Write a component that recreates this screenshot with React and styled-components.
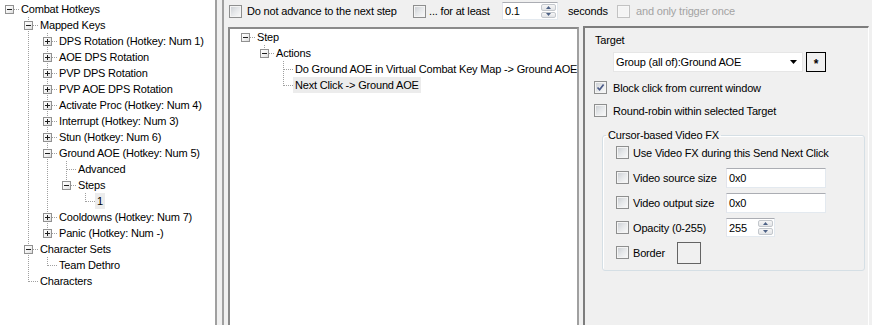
import React from "react";
import styled, { createGlobalStyle } from "styled-components";

const GlobalStyle = createGlobalStyle`
  html, body {
    margin: 0;
    padding: 0;
    background: #f0f0f0;
  }
  body {
    font-family: "Liberation Sans", Arial, sans-serif;
    font-size: 11px;
    color: #000;
  }
`;

const DOTS_V = "repeating-linear-gradient(to bottom, #a0a0a0 0 1px, transparent 1px 2px)";
const DOTS_H = "repeating-linear-gradient(to right, #a0a0a0 0 1px, transparent 1px 2px)";

const Window = styled.div`
  display: flex;
  width: 872px;
  height: 325px;
  overflow: hidden;
  background: #f0f0f0;
  font-family: "Liberation Sans", Arial, sans-serif;
  font-size: 11px;
  letter-spacing: -0.18px;
  color: #000;
`;

const NavPane = styled.div`
  width: 215px;
  flex: none;
  background: #fff;
  border-right: 2px solid #a0a0a0;
  padding-top: 1px;
`;

const Splitter = styled.div`
  width: 5px;
  flex: none;
`;

const Main = styled.div`
  flex: 1;
  min-width: 0;
  display: flex;
  flex-direction: column;
  border-left: 2px solid #a0a0a0;
`;

const Toolbar = styled.div`
  display: flex;
  align-items: center;
  height: 22px;
  padding-left: 5px;
  flex: none;
`;

const Body = styled.div`
  flex: 1;
  display: flex;
  padding: 4px 3px 0 4px;
  gap: 4px;
  min-height: 0;
`;

const StepPane = styled.div`
  width: 341px;
  flex: none;
  margin-top: 1px;
  background: #fff;
  border-style: solid;
  border-width: 2px 2px 0 2px;
  border-color: #8a8a8a #a0a0a0 #a0a0a0 #8a8a8a;
  padding-left: 6px;
  overflow: hidden;
`;

const SettingsPane = styled.div`
  flex: 1;
  display: flex;
  flex-direction: column;
  border-style: solid;
  border-width: 2px 1px 0 2px;
  border-color: #7d7d7d #fff #fff #7d7d7d;
`;

/* ---------- tree ---------- */

const TreeRow = styled.div`
  display: flex;
  height: 16px;
`;

const Guide = styled.div`
  position: relative;
  width: 19px;
  flex: none;
`;

const VLine = styled.span`
  position: absolute;
  left: 9px;
  width: 1px;
  top: ${(p) => p.$top}px;
  height: ${(p) => p.$height}px;
  background: ${DOTS_V};
`;

const HLine = styled.span`
  position: absolute;
  left: 10px;
  top: 8px;
  width: 9px;
  height: 1px;
  background: ${DOTS_H};
`;

const Expander = styled.span`
  position: absolute;
  left: 5px;
  top: 4px;
  width: 9px;
  height: 9px;
  box-sizing: border-box;
  border: 1px solid #919191;
  background: linear-gradient(135deg, #ffffff 0%, #f2f2f2 55%, #dcdcdc 100%);
  z-index: 1;

  &::before {
    content: "";
    position: absolute;
    left: 1px;
    top: 3px;
    width: 5px;
    height: 1px;
    background: #1e1e1e;
  }

  &::after {
    content: "";
    display: ${(p) => (p.$open ? "none" : "block")};
    position: absolute;
    left: 3px;
    top: 1px;
    width: 1px;
    height: 5px;
    background: #1e1e1e;
  }
`;

const TreeLabel = styled.span`
  padding: 0 2px;
  line-height: 16px;
  white-space: nowrap;
  background: ${(p) => (p.$selected ? "#ececec" : "transparent")};
`;

function flatten(nodes, level = 0, continues = [], out = []) {
  nodes.forEach((node, i) => {
    const isLast = i === nodes.length - 1;
    out.push({
      node,
      level,
      isLast,
      isFirstRoot: level === 0 && i === 0,
      continues,
    });
    if (node.children && node.open) {
      flatten(node.children, level + 1, [...continues, !isLast], out);
    }
  });
  return out;
}

function Tree({ data }) {
  const rows = flatten(data);
  return rows.map((row, idx) => {
    const { node, isLast, isFirstRoot, continues } = row;
    const hasKids = !!node.children || node.collapsed;
    const top = isFirstRoot ? 8 : 0;
    const bottom = isLast ? 9 : 16;
    return (
      <TreeRow key={idx}>
        {continues.map((c, k) => (
          <Guide key={k}>{c && <VLine $top={0} $height={16} />}</Guide>
        ))}
        <Guide>
          {bottom > top && <VLine $top={top} $height={bottom - top} />}
          <HLine />
          {hasKids && <Expander $open={!!node.open} />}
        </Guide>
        <TreeLabel $selected={node.selected}>{node.label}</TreeLabel>
      </TreeRow>
    );
  });
}

const navData = [
  {
    label: "Combat Hotkeys",
    open: true,
    children: [
      {
        label: "Mapped Keys",
        open: true,
        children: [
          { label: "DPS Rotation (Hotkey: Num 1)", collapsed: true },
          { label: "AOE DPS Rotation", collapsed: true },
          { label: "PVP DPS Rotation", collapsed: true },
          { label: "PVP AOE DPS Rotation", collapsed: true },
          { label: "Activate Proc (Hotkey: Num 4)", collapsed: true },
          { label: "Interrupt (Hotkey: Num 3)", collapsed: true },
          { label: "Stun (Hotkey: Num 6)", collapsed: true },
          {
            label: "Ground AOE (Hotkey: Num 5)",
            open: true,
            children: [
              { label: "Advanced" },
              {
                label: "Steps",
                open: true,
                children: [{ label: "1", selected: true }],
              },
            ],
          },
          { label: "Cooldowns (Hotkey: Num 7)", collapsed: true },
          { label: "Panic (Hotkey: Num -)", collapsed: true },
        ],
      },
      {
        label: "Character Sets",
        open: true,
        children: [{ label: "Team Dethro" }],
      },
      { label: "Characters" },
    ],
  },
];

const stepData = [
  {
    label: "Step",
    open: true,
    children: [
      {
        label: "Actions",
        open: true,
        children: [
          { label: "Do Ground AOE in Virtual Combat Key Map -> Ground AOE" },
          { label: "Next Click -> Ground AOE", selected: true },
        ],
      },
    ],
  },
];

/* ---------- form controls ---------- */

const Option = styled.label`
  display: flex;
  align-items: center;
  gap: ${(p) => p.$gap}px;
  width: ${(p) => (p.$width ? `${p.$width}px` : "auto")};
  flex: none;
  white-space: nowrap;
  color: ${(p) => (p.$disabled ? "#a3a3a3" : "#000")};
`;

const Box = styled.span`
  position: relative;
  width: 13px;
  height: 13px;
  flex: none;
  box-sizing: border-box;
  border: 1px solid ${(p) => (p.$disabled ? "#c2c2c2" : "#8e8f8f")};
  background: ${(p) =>
    p.$disabled
      ? "#f4f4f4"
      : "linear-gradient(135deg, #c8ccd1 0%, #e6e8ea 50%, #fbfbfb 100%)"};
  box-shadow: inset 0 0 0 1px ${(p) => (p.$disabled ? "#f7f7f7" : "#f4f4f4")};

  svg {
    position: absolute;
    left: 1px;
    top: 1px;
  }
`;

function Check({ checked, disabled, gap = 5, width, children }) {
  return (
    <Option $gap={gap} $width={width} $disabled={disabled}>
      <Box $disabled={disabled}>
        {checked && (
          <svg width="9" height="9" viewBox="0 0 9 9">
            <path
              d="M1.5 4.5 L3.6 6.8 L7.6 1.6"
              fill="none"
              stroke="#4a5a88"
              strokeWidth="1.7"
            />
          </svg>
        )}
      </Box>
      {children}
    </Option>
  );
}

const Field = styled.div`
  display: flex;
  align-items: center;
  width: ${(p) => p.$width}px;
  height: ${(p) => p.$height}px;
  box-sizing: border-box;
  flex: none;
  background: #fff;
  border: 1px solid;
  border-color: #abadb3 #e3e9ef #e3e9ef #e2e3ea;
`;

const FieldText = styled.span`
  flex: 1;
  padding-left: 2px;
  white-space: nowrap;
`;

const SpinButtons = styled.div`
  display: flex;
  flex-direction: column;
  width: 16px;
  height: 100%;
  box-sizing: border-box;
  padding: 1px 1px 1px 0;
  gap: 1px;
`;

const SpinButton = styled.div`
  flex: 1;
  display: flex;
  align-items: center;
  justify-content: center;
  border: 1px solid #c3c7cc;
  border-radius: 2px;
  background: linear-gradient(#f6f6f6, #e2e4e7);
`;

function Arrow({ up }) {
  return (
    <svg width="5" height="3" viewBox="0 0 5 3">
      <path d={up ? "M0 3 L2.5 0 L5 3 Z" : "M0 0 L5 0 L2.5 3 Z"} fill="#4d6185" />
    </svg>
  );
}

function Spin({ value, width, height }) {
  return (
    <Field $width={width} $height={height}>
      <FieldText>{value}</FieldText>
      <SpinButtons>
        <SpinButton>
          <Arrow up />
        </SpinButton>
        <SpinButton>
          <Arrow />
        </SpinButton>
      </SpinButtons>
    </Field>
  );
}

const Plain = styled.span`
  white-space: nowrap;
  flex: none;
  width: ${(p) => (p.$width ? `${p.$width}px` : "auto")};
`;

const SpinSlot = styled.div`
  width: ${(p) => p.$width}px;
  flex: none;
`;

/* ---------- settings pane ---------- */

const PaneRow = styled.div`
  display: flex;
  align-items: center;
  gap: ${(p) => p.$gap || 0}px;
  height: ${(p) => p.$h}px;
  margin-top: ${(p) => p.$mt || 0}px;
  margin-left: ${(p) => p.$ml || 0}px;
  flex: none;
`;

const Combo = styled.div`
  display: flex;
  align-items: center;
  justify-content: space-between;
  width: 190px;
  height: 20px;
  box-sizing: border-box;
  padding: 0 5px 0 2px;
  background: #fff;
  border: 1px solid #e6e6e6;
  white-space: nowrap;
`;

const StarButton = styled.div`
  display: flex;
  align-items: center;
  justify-content: center;
  width: 20px;
  height: 20px;
  box-sizing: border-box;
  border: 1px solid #000;
  background: #f0f0f0;
  font-size: 12px;
  font-weight: bold;
  padding-top: 4px;
`;

const Group = styled.fieldset`
  margin: 10px 3px 0 17px;
  padding: 0 0 5px 3px;
  border: 1px solid #d5dfe5;
  border-radius: 3px;
  box-shadow: inset 1px 1px 0 #fff;
  min-width: 0;
`;

const Legend = styled.legend`
  padding: 0 2px;
  line-height: 14px;
  white-space: nowrap;
`;

const GroupRow = styled.div`
  display: flex;
  align-items: center;
  height: 25px;
  margin-left: 10px;
  margin-top: ${(p) => p.$mt || 0}px;
`;

const ColorSwatch = styled.div`
  width: 24px;
  height: 22px;
  box-sizing: border-box;
  border: 1px solid #646464;
  background: #f0f0f0;
`;

export default function App() {
  return (
    <>
      <GlobalStyle />
      <Window>
        <NavPane>
          <Tree data={navData} />
        </NavPane>
        <Splitter />
        <Main>
          <Toolbar>
            <Check width={184}>Do not advance to the next step</Check>
            <Check width={89} gap={3}>
              ... for at least
            </Check>
            <SpinSlot $width={66}>
              <Spin value="0.1" width={56} height={18} />
            </SpinSlot>
            <Plain $width={49}>seconds</Plain>
            <Check disabled gap={6}>
              and only trigger once
            </Check>
          </Toolbar>
          <Body>
            <StepPane>
              <Tree data={stepData} />
            </StepPane>
            <SettingsPane>
              <PaneRow $h={14} $mt={5} $ml={10}>
                Target
              </PaneRow>
              <PaneRow $h={20} $mt={5} $ml={28} $gap={3}>
                <Combo>
                  <span>Group (all of):Ground AOE</span>
                  <svg width="7" height="4" viewBox="0 0 7 4">
                    <path d="M0 0 L7 0 L3.5 4 Z" fill="#000" />
                  </svg>
                </Combo>
                <StarButton>*</StarButton>
              </PaneRow>
              <PaneRow $h={15} $mt={8} $ml={9}>
                <Check checked gap={6}>
                  Block click from current window
                </Check>
              </PaneRow>
              <PaneRow $h={15} $mt={8} $ml={9}>
                <Check gap={6}>Round-robin within selected Target</Check>
              </PaneRow>
              <Group>
                <Legend>Cursor-based Video FX</Legend>
                <GroupRow $mt={-2}>
                  <Check gap={4}>Use Video FX during this Send Next Click</Check>
                </GroupRow>
                <GroupRow>
                  <Check gap={4} width={110}>
                    Video source size
                  </Check>
                  <Field $width={100} $height={20}>
                    <FieldText>0x0</FieldText>
                  </Field>
                </GroupRow>
                <GroupRow>
                  <Check gap={4} width={110}>
                    Video output size
                  </Check>
                  <Field $width={100} $height={20}>
                    <FieldText>0x0</FieldText>
                  </Field>
                </GroupRow>
                <GroupRow>
                  <Check gap={4} width={110}>
                    Opacity (0-255)
                  </Check>
                  <Spin value="255" width={49} height={19} />
                </GroupRow>
                <GroupRow>
                  <Check gap={4} width={61}>
                    Border
                  </Check>
                  <ColorSwatch />
                </GroupRow>
              </Group>
            </SettingsPane>
          </Body>
        </Main>
      </Window>
    </>
  );
}
